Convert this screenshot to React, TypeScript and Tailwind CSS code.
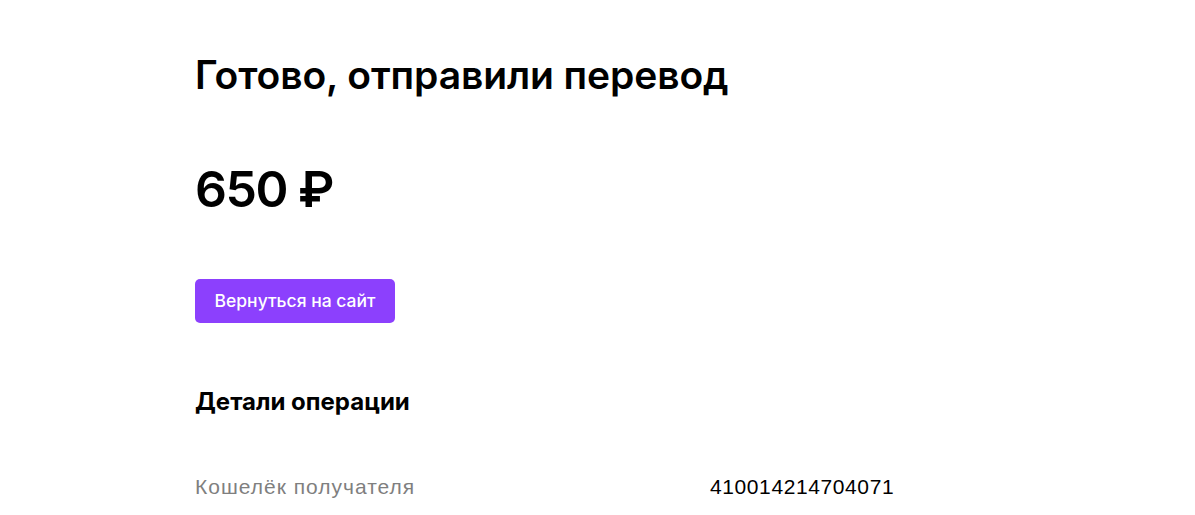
import React from 'react';

export default function App() {
  return (
    <div className="min-h-screen bg-white" style={{ fontFamily: 'Inter, "Noto Sans", sans-serif' }}>
      <div className="mx-auto w-[805px] pt-[49px]">
        {/* Header */}
        <h1 className="text-[39px] font-semibold leading-[52px] tracking-[-0.1px] text-black">
          Готово, отправили перевод
        </h1>
        <div className="mt-[56px] text-[50px] font-semibold leading-[64px] tracking-[-1.5px] text-black">650 ₽</div>

        <button className="mt-[58px] h-[44px] w-[200px] rounded-[5px] bg-[#8c40fd] text-[17.5px] font-medium text-white">
          Вернуться на сайт
        </button>

        {/* Details */}
        <h2 className="mt-[64px] text-[24px] font-bold leading-[30px] text-black">Детали операции</h2>
        <div
          className="mt-[56px] flex items-baseline text-[21px] leading-[28px]"
          style={{ fontFamily: '"Liberation Sans", Arial, sans-serif' }}
        >
          <div className="w-[515px] tracking-[1px] text-[#7f7f7f]">Кошелёк получателя</div>
          <div className="tracking-[0.6px] text-black">410014214704071</div>
        </div>
      </div>
    </div>
  );
}
